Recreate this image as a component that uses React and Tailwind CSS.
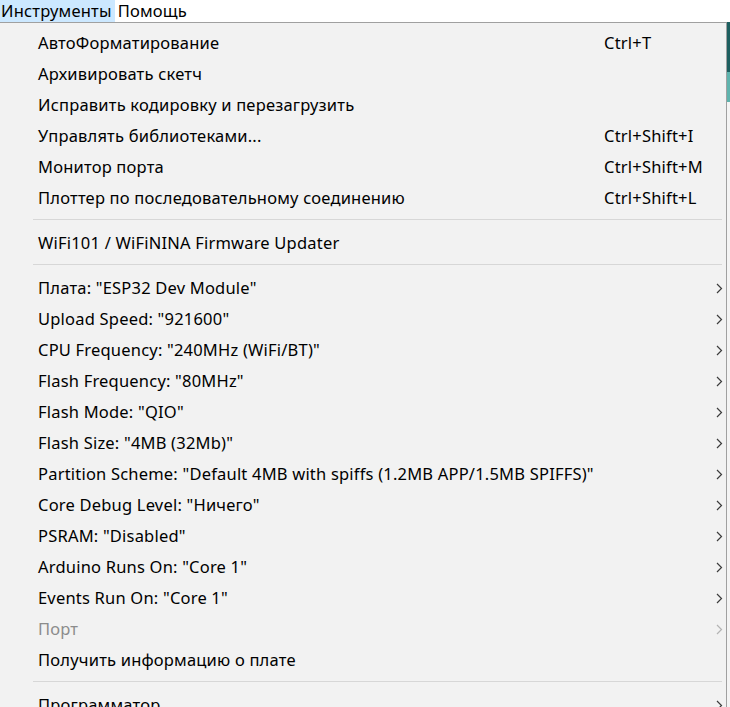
import React from "react";

const items = [
  { t: "АвтоФорматирование", k: "Ctrl+T" },
  { t: "Архивировать скетч" },
  { t: "Исправить кодировку и перезагрузить" },
  { t: "Управлять библиотеками...", k: "Ctrl+Shift+I" },
  { t: "Монитор порта", k: "Ctrl+Shift+M" },
  { t: "Плоттер по последовательному соединению", k: "Ctrl+Shift+L" },
  { sep: true },
  { t: "WiFi101 / WiFiNINA Firmware Updater" },
  { sep: true },
  { t: 'Плата: "ESP32 Dev Module"', sub: true },
  { t: 'Upload Speed: "921600"', sub: true },
  { t: 'CPU Frequency: "240MHz (WiFi/BT)"', sub: true },
  { t: 'Flash Frequency: "80MHz"', sub: true },
  { t: 'Flash Mode: "QIO"', sub: true },
  { t: 'Flash Size: "4MB (32Mb)"', sub: true },
  { t: 'Partition Scheme: "Default 4MB with spiffs (1.2MB APP/1.5MB SPIFFS)"', sub: true },
  { t: 'Core Debug Level: "Ничего"', sub: true },
  { t: 'PSRAM: "Disabled"', sub: true },
  { t: 'Arduino Runs On: "Core 1"', sub: true },
  { t: 'Events Run On: "Core 1"', sub: true },
  { t: "Порт", sub: true, dis: true },
  { t: "Получить информацию о плате" },
  { sep: true },
  { t: "Программатор", sub: true },
];

function Chevron({ dis }) {
  return (
    <svg width="7" height="11" viewBox="0 0 7 11" className="ml-[13px]">
      <polyline
        points="1,1 5.5,5.5 1,10"
        fill="none"
        stroke={dis ? "#b4b4b4" : "#3c3c3c"}
        strokeWidth="1.2"
      />
    </svg>
  );
}

export default function App() {
  return (
    <div
      className="w-[730px] h-[707px] overflow-hidden bg-white text-black text-[16.5px] tracking-[0.2px] leading-none"
      style={{ fontFamily: '"Noto Sans", "Open Sans", sans-serif' }}
    >
      <div className="flex h-[22px] items-center">
        <div className="h-full flex items-center bg-[#cce8ff] pl-[1px] pr-[3px]">Инструменты</div>
        <div className="h-full flex items-center pl-[3px]">Помощь</div>
      </div>
      <div className="flex">
        <div className="w-[727px] h-[700px] shrink-0 bg-[#f2f2f2] border-t border-r border-[#a0a0a0] pt-[5px]">
          {items.map((it, i) =>
            it.sep ? (
              <div key={i} className="h-[14px] pt-[5px] pl-[33px] pr-[4px]">
                <div className="h-px bg-[#d7d7d7]" />
              </div>
            ) : (
              <div key={i} className="h-[31px] flex items-center pl-[38px]">
                <span className={"w-[566px] shrink-0 whitespace-nowrap " + (it.dis ? "text-[#8c8c8c]" : "")}>
                  {it.t}
                </span>
                <span className="flex-1 whitespace-nowrap">{it.k || ""}</span>
                <span className="w-[23px] shrink-0 flex items-center">
                  {it.sub ? <Chevron dis={it.dis} /> : null}
                </span>
              </div>
            )
          )}
        </div>
        <div className="w-[3px] flex flex-col">
          <div className="h-[50px] bg-[#1e5f60]" />
          <div className="h-[30px] bg-[#5fb3ad]" />
          <div className="flex-1 bg-[#f4f4f4]" />
          <div className="h-[10px] bg-[#4aa39c]" />
        </div>
      </div>
    </div>
  );
}
